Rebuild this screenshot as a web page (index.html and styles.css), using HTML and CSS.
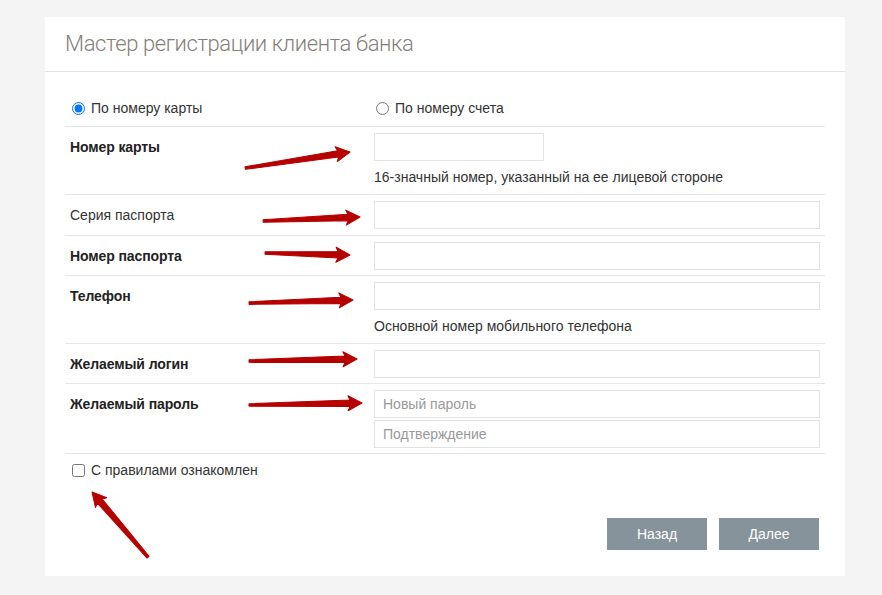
FILE: index.html
```html
<!DOCTYPE html>
<html lang="ru">
<head>
<meta charset="utf-8">
<title>Мастер регистрации клиента банка</title>
<link rel="stylesheet" href="styles.css">
</head>
<body>
<div class="card">
  <div class="card-head">
    <h1 class="title">Мастер регистрации клиента банка</h1>
  </div>
  <div class="card-body">
    <div class="row row-radio">
      <label class="opt"><input class="radio" type="radio" name="mode" checked> По номеру карты</label>
      <label class="opt"><input class="radio" type="radio" name="mode"> По номеру счета</label>
    </div>
    <div class="row">
      <div class="label strong">Номер карты</div>
      <div class="field">
        <input class="inp inp-short" type="text">
        <div class="hint">16-значный номер, указанный на ее лицевой стороне</div>
      </div>
    </div>
    <div class="row row-plain">
      <div class="label">Серия паспорта</div>
      <div class="field"><input class="inp" type="text"></div>
    </div>
    <div class="row">
      <div class="label strong">Номер паспорта</div>
      <div class="field"><input class="inp" type="text"></div>
    </div>
    <div class="row">
      <div class="label strong">Телефон</div>
      <div class="field">
        <input class="inp" type="text">
        <div class="hint">Основной номер мобильного телефона</div>
      </div>
    </div>
    <div class="row">
      <div class="label strong">Желаемый логин</div>
      <div class="field"><input class="inp" type="text"></div>
    </div>
    <div class="row">
      <div class="label strong">Желаемый пароль</div>
      <div class="field field-stack">
        <input class="inp" type="password" placeholder="Новый пароль">
        <input class="inp" type="password" placeholder="Подтверждение">
      </div>
    </div>
    <div class="agree">
      <label class="opt"><input class="check" type="checkbox"> С правилами ознакомлен</label>
    </div>
    <div class="actions">
      <button class="btn" type="button">Назад</button>
      <button class="btn" type="button">Далее</button>
    </div>
  </div>
</div>

<svg class="arrows" width="882" height="595" viewBox="0 0 882 595" aria-hidden="true">
  <g fill="#b60000" stroke="#b60000" stroke-width="1" stroke-linejoin="round">
    <path transform="translate(350 152) rotate(-8.7)" d="M0 0 L-14 -7.5 L-12 -3.2 L-106 -1.3 L-106 1.3 L-12 3.2 L-14 7.5 Z"/>
    <path transform="translate(360 217) rotate(-2.4)" d="M0 0 L-14 -7.5 L-12 -3.2 L-97 -1.3 L-97 1.3 L-12 3.2 L-14 7.5 Z"/>
    <path transform="translate(350 255) rotate(1.3)" d="M0 0 L-14 -7.5 L-12 -3.2 L-85 -1.3 L-85 1.3 L-12 3.2 L-14 7.5 Z"/>
    <path transform="translate(353 300) rotate(-1.7)" d="M0 0 L-14 -7.5 L-12 -3.2 L-104 -1.3 L-104 1.3 L-12 3.2 L-14 7.5 Z"/>
    <path transform="translate(357 359) rotate(-1.1)" d="M0 0 L-14 -7.5 L-12 -3.2 L-108 -1.3 L-108 1.3 L-12 3.2 L-14 7.5 Z"/>
    <path transform="translate(362 403) rotate(-1)" d="M0 0 L-14 -7.5 L-12 -3.2 L-113 -1.3 L-113 1.3 L-12 3.2 L-14 7.5 Z"/>
    <path transform="translate(92 492) rotate(229.3)" d="M0 0 L-14 -7.5 L-12 -3.2 L-86 -1.3 L-86 1.3 L-12 3.2 L-14 7.5 Z"/>
  </g>
</svg>
</body>
</html>
```

FILE: styles.css
```css
html, body {
  margin: 0;
  padding: 0;
}

body {
  background: #f4f4f4;
  font-family: "Liberation Sans", Arial, sans-serif;
  font-size: 14px;
  color: #333;
  width: 882px;
  height: 595px;
  overflow: hidden;
  padding-top: 17px;
  box-sizing: border-box;
}

.card {
  margin-left: 45px;
  width: 800px;
  background: #fff;
}

.card-head {
  height: 54px;
  border-bottom: 1px solid #e3e3e3;
  padding-left: 20px;
}

.title {
  margin: 0;
  font-family: Roboto, "Liberation Sans", Arial, sans-serif;
  font-size: 22px;
  font-weight: 300;
  line-height: 54px;
  color: #85807a;
  letter-spacing: -0.4px;
}

.card-body {
  padding: 20px 20px 26px 20px;
}

.row {
  display: grid;
  grid-template-columns: 304px 446px;
  padding: 6px 0 5px 5px;
  border-bottom: 1px solid #e6e6e6;
}

.row-plain {
  padding-bottom: 6px;
}

.row-radio {
  padding: 7px 0 8px 5px;
}

.opt {
  display: flex;
  align-items: center;
  line-height: 19px;
  color: #333;
}

.radio,
.check {
  margin: 0 6px 0 2px;
  width: 13px;
  height: 13px;
}

.label {
  line-height: 28px;
  color: #333;
}

.label.strong {
  font-weight: bold;
  color: #222;
  letter-spacing: -0.1px;
}

.field {
  display: flex;
  flex-direction: column;
  align-items: flex-start;
}

.field-stack {
  gap: 2px;
}

.inp {
  box-sizing: border-box;
  width: 446px;
  height: 28px;
  margin: 0;
  border: 1px solid #e2e2e2;
  padding: 0 8px;
  font-family: "Liberation Sans", Arial, sans-serif;
  font-size: 14px;
  color: #333;
  background: #fff;
  outline: none;
}

.inp::placeholder {
  color: #999;
}

.inp-short {
  width: 170px;
}

.hint {
  margin-top: 4px;
  line-height: 24px;
  color: #333;
}

.agree {
  padding: 7px 0 0 5px;
}

.actions {
  display: flex;
  justify-content: flex-end;
  gap: 12px;
  margin-top: 38px;
  padding-right: 6px;
}

.btn {
  width: 100px;
  height: 32px;
  border: none;
  background: #87939b;
  color: #fff;
  font-family: "Liberation Sans", Arial, sans-serif;
  font-size: 14px;
  padding: 0;
}

.arrows {
  position: absolute;
  left: 0;
  top: 0;
  pointer-events: none;
}
```
